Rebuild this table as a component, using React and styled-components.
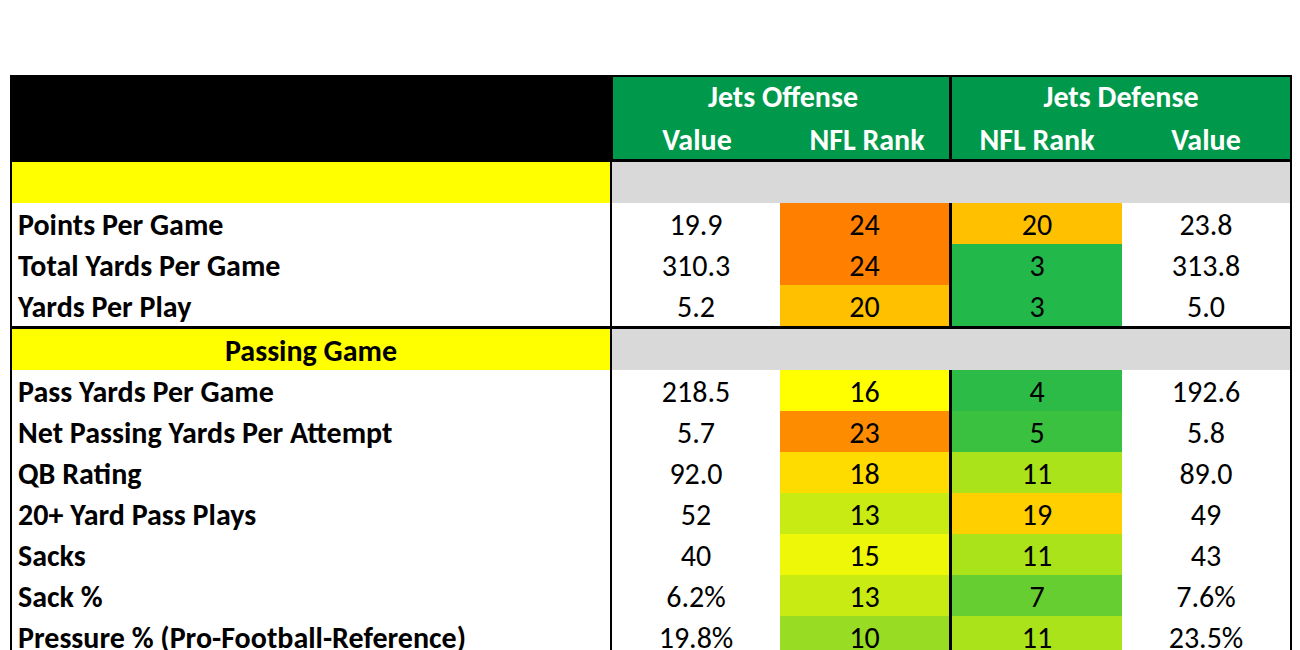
import React from 'react';
import styled, { createGlobalStyle } from 'styled-components';

const GlobalStyle = createGlobalStyle`
  body {
    margin: 0;
    background: #ffffff;
    font-family: Carlito, Lato, "Open Sans", sans-serif;
  }
`;

const Page = styled.div`
  padding: 75px 8px 0 10px;
`;

const Sheet = styled.div`
  width: 1282px;
  box-sizing: border-box;
  border: 2px solid #000;
  border-bottom: none;
`;

const Row = styled.div`
  display: grid;
  grid-template-columns: 600px 168px 172px 170px 168px;
  height: 41px;
  border-bottom: ${p => (p.$thick ? '3px solid #000' : 'none')};
`;

const HeaderBlock = styled.div`
  display: grid;
  grid-template-columns: 600px 340px 338px;
  grid-template-rows: 41px 41px;
  border-bottom: 3px solid #000;
`;

const BlackCorner = styled.div`
  grid-row: 1 / span 2;
  background: #000;
`;

const GreenGroup = styled.div`
  display: grid;
  grid-template-columns: ${p => p.$cols};
  grid-template-rows: 41px 41px;
  grid-row: 1 / span 2;
  background: #00984a;
  color: #fff;
  font-weight: 700;
  font-size: 30px;
  border-right: ${p => (p.$divider ? '3px solid #000' : 'none')};
  border-left: ${p => (p.$edge ? '1px solid #000' : 'none')};
`;

const GreenTitle = styled.div`
  grid-column: 1 / span 2;
  display: flex;
  align-items: center;
  justify-content: center;
  padding-bottom: 2px;
`;

const GreenSub = styled.div`
  display: flex;
  align-items: center;
  justify-content: center;
  padding-top: 2px;
`;

const Label = styled.div`
  box-sizing: border-box;
  border-right: 2px solid #000;
  background: ${p => p.$bg || '#fff'};
  font-weight: 700;
  font-size: 30px;
  color: #000;
  display: flex;
  align-items: center;
  justify-content: ${p => (p.$center ? 'center' : 'flex-start')};
  padding-left: ${p => (p.$center ? '0' : '6px')};
  padding-top: 2px;
  white-space: nowrap;
`;

const Band = styled.div`
  grid-column: 2 / span 4;
  background: #d9d9d9;
`;

const Cell = styled.div`
  box-sizing: border-box;
  background: ${p => p.$bg || '#fff'};
  border-right: ${p => (p.$divider ? '3px solid #000' : 'none')};
  font-size: 30px;
  color: #000;
  display: flex;
  align-items: center;
  justify-content: center;
  padding-top: 2px;
`;

const C = {
  o24: '#ff8000',
  o23: '#fd8c00',
  a20: '#ffc000',
  a19: '#ffcf00',
  a18: '#ffdc00',
  y16: '#ffff00',
  y15: '#eef707',
  l13: '#c8eb13',
  l11: '#abe31a',
  l10: '#98dc24',
  g7: '#66ce30',
  g5: '#3ac140',
  g4: '#2cbb46',
  g3: '#22b84a',
};

const overall = [
  ['Points Per Game', '19.9', '24', C.o24, '20', C.a20, '23.8'],
  ['Total Yards Per Game', '310.3', '24', C.o24, '3', C.g3, '313.8'],
  ['Yards Per Play', '5.2', '20', C.a20, '3', C.g3, '5.0'],
];

const passing = [
  ['Pass Yards Per Game', '218.5', '16', C.y16, '4', C.g4, '192.6'],
  ['Net Passing Yards Per Attempt', '5.7', '23', C.o23, '5', C.g5, '5.8'],
  ['QB Rating', '92.0', '18', C.a18, '11', C.l11, '89.0'],
  ['20+ Yard Pass Plays', '52', '13', C.l13, '19', C.a19, '49'],
  ['Sacks', '40', '15', C.y15, '11', C.l11, '43'],
  ['Sack %', '6.2%', '13', C.l13, '7', C.g7, '7.6%'],
  ['Pressure % (Pro-Football-Reference)', '19.8%', '10', C.l10, '11', C.l11, '23.5%'],
];

const StatRow = ({ data, thick }) => {
  const [label, ov, or, orBg, dr, drBg, dv] = data;
  return (
    <Row $thick={thick}>
      <Label>{label}</Label>
      <Cell>{ov}</Cell>
      <Cell $bg={orBg} $divider>{or}</Cell>
      <Cell $bg={drBg}>{dr}</Cell>
      <Cell>{dv}</Cell>
    </Row>
  );
};

const App = () => {
  return (
    <Page>
      <GlobalStyle />
      <Sheet>
        <HeaderBlock>
          <BlackCorner />
          <GreenGroup $cols="168px 172px" $divider $edge>
            <GreenTitle>Jets Offense</GreenTitle>
            <GreenSub>Value</GreenSub>
            <GreenSub>NFL Rank</GreenSub>
          </GreenGroup>
          <GreenGroup $cols="170px 168px">
            <GreenTitle>Jets Defense</GreenTitle>
            <GreenSub>NFL Rank</GreenSub>
            <GreenSub>Value</GreenSub>
          </GreenGroup>
        </HeaderBlock>

        <Row>
          <Label $bg="#ffff00" />
          <Band />
        </Row>
        {overall.map((r, i) => (
          <StatRow key={r[0]} data={r} thick={i === overall.length - 1} />
        ))}

        <Row>
          <Label $bg="#ffff00" $center>Passing Game</Label>
          <Band />
        </Row>
        {passing.map(r => (
          <StatRow key={r[0]} data={r} />
        ))}
      </Sheet>
    </Page>
  );
};

export default App;
